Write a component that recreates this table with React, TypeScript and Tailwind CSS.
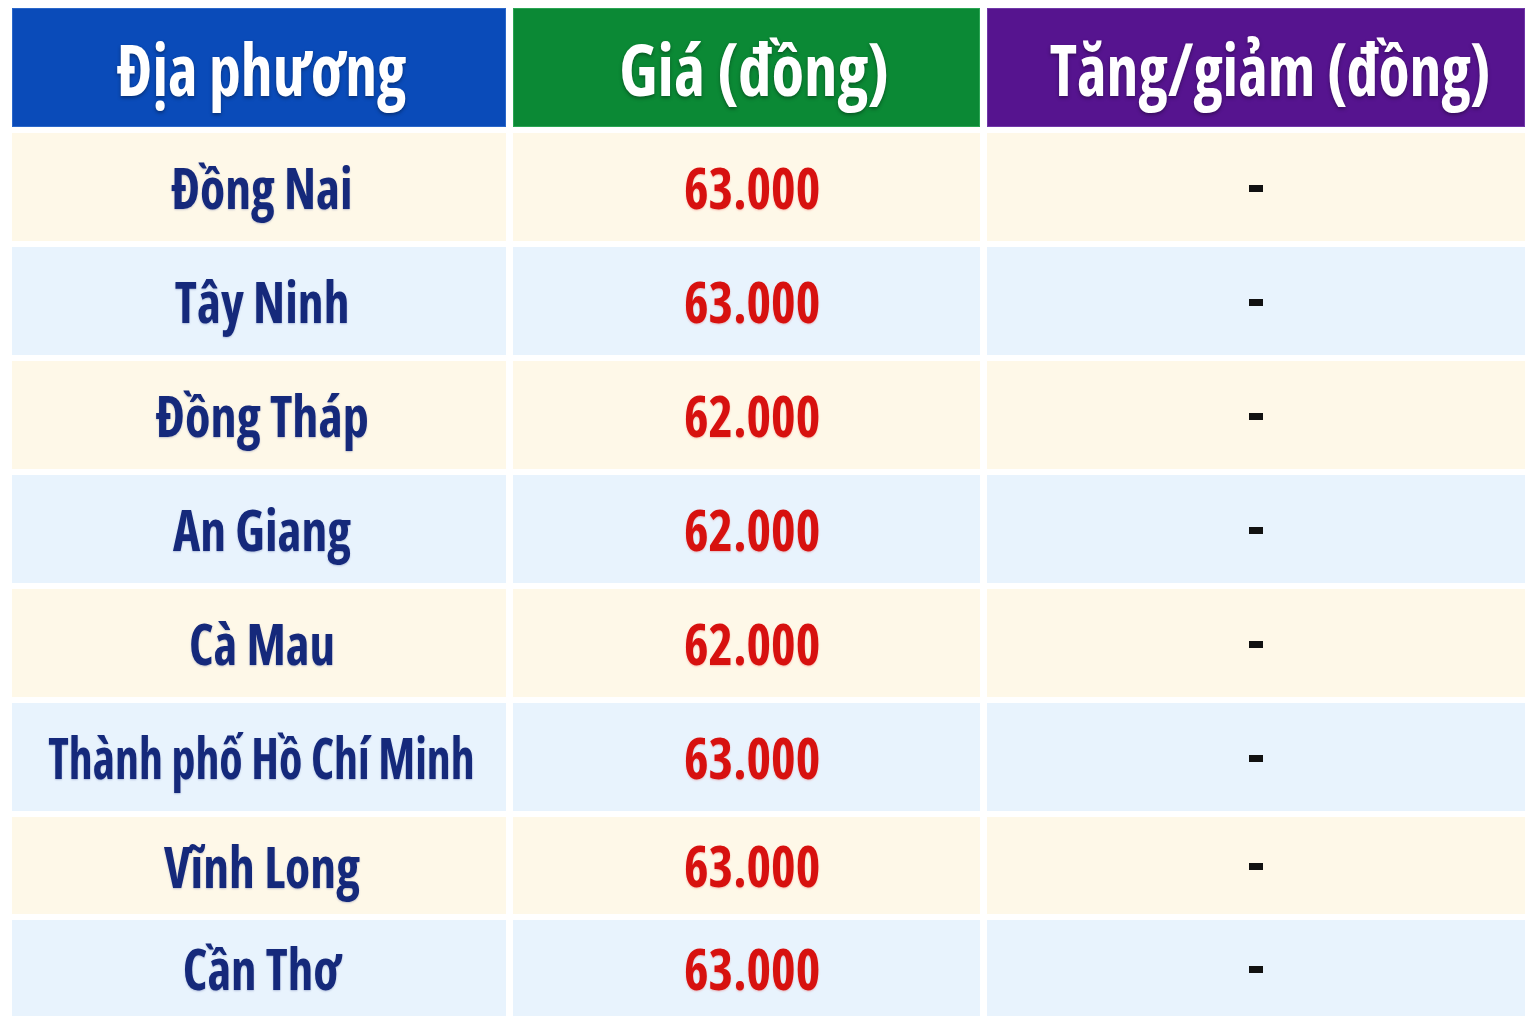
const rows = [
  { name: "Đồng Nai", price: "63.000", h: "h-[108px]", sx: "scale-x-[0.89]" },
  { name: "Tây Ninh", price: "63.000", h: "h-[108px]", sx: "scale-x-[0.89]" },
  { name: "Đồng Tháp", price: "62.000", h: "h-[108px]", sx: "scale-x-[0.9]" },
  { name: "An Giang", price: "62.000", h: "h-[108px]", sx: "scale-x-[0.89]" },
  { name: "Cà Mau", price: "62.000", h: "h-[108px]", sx: "scale-x-[0.88]" },
  { name: "Thành phố Hồ Chí Minh", price: "63.000", h: "h-[108px]", sx: "scale-x-[0.825]" },
  { name: "Vĩnh Long", price: "63.000", h: "h-[97px]", sx: "scale-x-[0.89]" },
  { name: "Cần Thơ", price: "63.000", h: "h-[96px]", sx: "scale-x-[0.88]" },
];

const font = { fontFamily: "'Open Sans', 'Noto Sans', sans-serif", fontStretch: "75%" };

function Squeeze({ children, className }: { children: React.ReactNode; className: string }) {
  return (
    <span className={"inline-block whitespace-nowrap " + className} style={font}>
      {children}
    </span>
  );
}

const headText = "text-[72px] font-bold leading-none text-white [text-shadow:0_2px_4px_rgba(0,0,0,0.35)]";

export default function App() {
  return (
    <div className="min-h-screen w-[1536px] bg-white pl-[12px] pt-[8px]">
      <div className="grid grid-cols-[494px_467px_538px] gap-x-[7px] gap-y-[6px]">
        <div className="flex h-[119px] items-center justify-center border border-[#2a67c9] bg-[#0a4bb9] pl-[6px]">
          <Squeeze className={"scale-x-[0.885] " + headText}>Địa phương</Squeeze>
        </div>
        <div className="flex h-[119px] items-center justify-center border border-[#2aa553] bg-[#0b8935] pl-[16px]">
          <Squeeze className={"scale-x-[0.93] " + headText}>Giá (đồng)</Squeeze>
        </div>
        <div className="flex h-[119px] items-center justify-center border border-[#7038a8] bg-[#56148f] pl-[28px]">
          <Squeeze className={"scale-x-[0.885] " + headText}>Tăng/giảm (đồng)</Squeeze>
        </div>

        {rows.map((r, i) => {
          const bg = i % 2 === 0 ? "bg-[#fef8e8]" : "bg-[#e8f3fd]";
          return (
            <div key={r.name} className="contents">
              <div className={"flex items-center justify-center pl-[6px] " + r.h + " " + bg}>
                <Squeeze
                  className={
                    r.sx +
                    " text-[58px] font-bold leading-none text-[#15297b] [text-shadow:0_1px_2px_rgba(21,41,123,0.25)]"
                  }
                >
                  {r.name}
                </Squeeze>
              </div>
              <div className={"flex items-center justify-center pl-[11px] " + r.h + " " + bg}>
                <Squeeze className="scale-x-[0.92] text-[57px] font-bold leading-none text-[#d7110f] [text-shadow:0_1px_2px_rgba(215,17,15,0.25)]">
                  {r.price}
                </Squeeze>
              </div>
              <div className={"flex items-center justify-center pt-[2px] " + r.h + " " + bg}>
                <span className="block h-[7px] w-[14px] bg-[#111111]" />
              </div>
            </div>
          );
        })}
      </div>
    </div>
  );
}
